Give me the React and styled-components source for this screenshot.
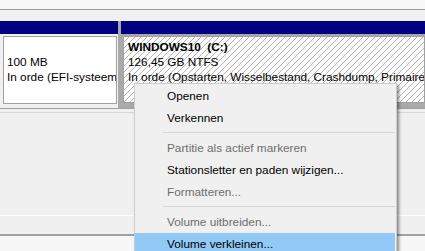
import React from "react";
import styled, { createGlobalStyle } from "styled-components";

const GlobalStyle = createGlobalStyle`
  html, body {
    margin: 0;
    padding: 0;
    background: #f0f0f0;
  }
  body {
    font-family: "Liberation Sans", Arial, sans-serif;
    font-size: 11.8px;
  }
`;

const menuItems = [
  { label: "Openen" },
  { label: "Verkennen" },
  { separator: true },
  { label: "Partitie als actief markeren", disabled: true },
  { label: "Stationsletter en paden wijzigen..." },
  { label: "Formatteren...", disabled: true },
  { separator: true },
  { label: "Volume uitbreiden...", disabled: true },
  { label: "Volume verkleinen...", active: true },
];

function App() {
  return (
    <>
      <GlobalStyle />
      <Screen>
        <TopStrip />
        <DiskArea>
          <DiskRow>
            <Partition width="118px">
              <Header />
              <BodyWrap>
                <PartBody>
                  <Line>&nbsp;</Line>
                  <Line>100 MB</Line>
                  <Line>In orde (EFI-systeempartitie)</Line>
                </PartBody>
              </BodyWrap>
            </Partition>
            <Partition selected>
              <Header />
              <BodyWrap selected>
                <PartBody hatched>
                  <Line bold>WINDOWS10&nbsp;&nbsp;(C:)</Line>
                  <Line>126,45 GB NTFS</Line>
                  <Line>
                    In orde (Opstarten, Wisselbestand, Crashdump, Primaire
                    partitie)
                  </Line>
                </PartBody>
              </BodyWrap>
            </Partition>
          </DiskRow>
        </DiskArea>
        <LowerPane>
          <Filler />
          <StatusStrip />
          <Bottom />
        </LowerPane>

        <Menu>
          {menuItems.map((item, i) =>
            item.separator ? (
              <Separator key={i} />
            ) : (
              <MenuItem key={i} disabled={item.disabled} active={item.active}>
                {item.label}
              </MenuItem>
            )
          )}
        </Menu>
      </Screen>
    </>
  );
}

export default App;

const Screen = styled.div`
  position: relative;
  width: 425px;
  height: 251px;
  overflow: hidden;
  background: #f0f0f0;
  display: flex;
  flex-direction: column;
`;

const TopStrip = styled.div`
  height: 9px;
  background: #f8f8f8;
  border-bottom: 1px solid #a0a0a0;
`;

const DiskArea = styled.div`
  padding-top: 11px;
  border-bottom: 1px solid #a0a0a0;
`;

const DiskRow = styled.div`
  display: flex;
  height: 87px;
`;

const Partition = styled.div`
  display: flex;
  flex-direction: column;
  flex: ${(p) => (p.width ? `0 0 ${p.width}` : "1 1 auto")};
  min-width: 0;
  background: ${(p) => (p.selected ? "#a9a9a9" : "#f0f0f0")};
  padding-left: ${(p) => (p.selected ? "3px" : "0")};
`;

const Header = styled.div`
  height: 13px;
  background: #000080;
`;

const BodyWrap = styled.div`
  flex: 1;
  display: flex;
  min-height: 0;
  padding: ${(p) => (p.selected ? "2px 0 5px 2px" : "2px 1px 4px 3px")};
`;

const PartBody = styled.div`
  flex: 1;
  min-width: 0;
  overflow: hidden;
  border: 1px solid #a0a0a0;
  padding: ${(p) => (p.hatched ? "3px 0 0 4px" : "3px 0 0 3px")};
  background: ${(p) =>
    p.hatched
      ? "repeating-linear-gradient(135deg, #ffffff 0px, #ffffff 3.3px, #b4b4b4 3.3px, #b4b4b4 4.24px)"
      : "#ffffff"};
`;

const Line = styled.div`
  line-height: 15px;
  white-space: nowrap;
  color: #000;
  font-weight: ${(p) => (p.bold ? "bold" : "normal")};
`;

const LowerPane = styled.div`
  flex: 1;
  display: flex;
  flex-direction: column;
`;

const Filler = styled.div`
  height: 102px;
  margin-top: 3px;
  border-top: 1px solid #d6d6d6;
`;

const StatusStrip = styled.div`
  height: 18px;
  border-top: 1px solid #ffffff;
  border-bottom: 2px solid #a0a0a0;
`;

const Bottom = styled.div`
  flex: 1;
  background: #f7f7f7;
`;

const Menu = styled.div`
  position: absolute;
  left: 134px;
  top: 83px;
  width: 260px;
  padding: 1px 1px 2px 0;
  background: #f0f0f0;
  border: 1px solid #cccccc;
  box-shadow: 2px 2px 3px rgba(0, 0, 0, 0.45);
  font-family: "Liberation Sans", Arial, sans-serif;
  font-size: 11.8px;
`;

const MenuItem = styled.div`
  height: 22px;
  line-height: 22px;
  padding-left: 32px;
  white-space: nowrap;
  color: ${(p) => (p.disabled ? "#6d6d6d" : "#000000")};
  background: ${(p) => (p.active ? "#91c9f7" : "transparent")};
`;

const Separator = styled.div`
  height: 1px;
  margin: 3px 0 4px 28px;
  background: #d7d7d7;
`;
